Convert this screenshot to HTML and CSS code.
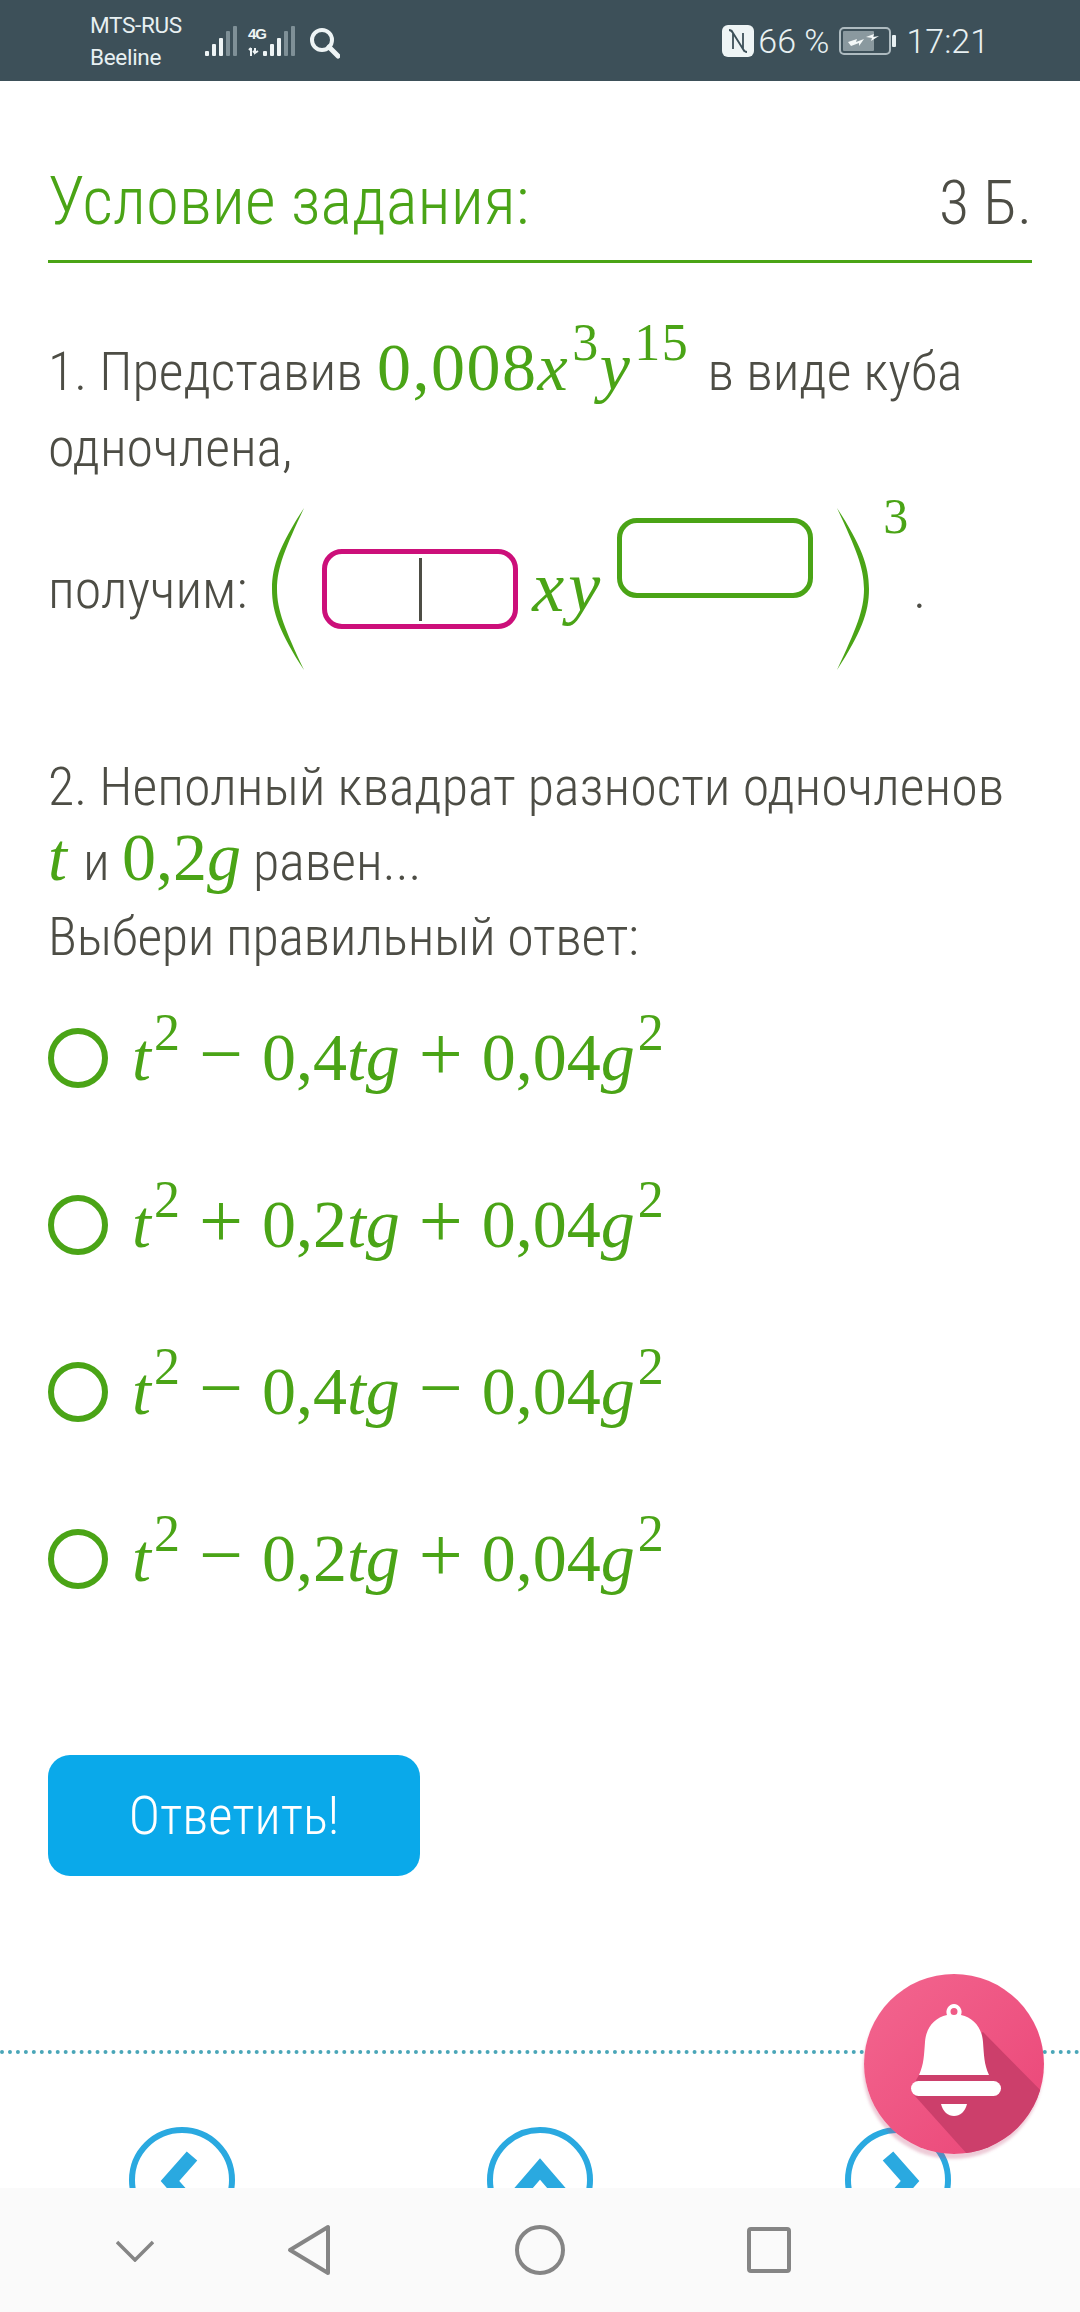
FILE: index.html
```html
<!DOCTYPE html>
<html lang="ru">
<head>
    <meta charset="UTF-8">
    <meta name="viewport" content="width=device-width, initial-scale=1.0">
    <title>Условие задания</title>
    <link rel="stylesheet" href="styles.css">
</head>
<body>
<div class="page">

    <!-- phone status bar -->
    <div class="status-bar">
        <div class="carriers">
            <div>MTS-RUS</div>
            <div>Beeline</div>
        </div>
        <svg class="signal" width="135" height="34" viewBox="0 0 135 34">
            <g fill="#eef4f5">
                <rect x="0" y="26" width="4" height="5" rx="1"/>
                <rect x="7" y="19" width="4" height="12" rx="1"/>
                <rect x="14" y="13" width="4" height="18" rx="1"/>
            </g>
            <g fill="#7f9097">
                <rect x="21" y="6" width="4" height="25" rx="1"/>
                <rect x="28" y="1" width="4" height="30" rx="1"/>
            </g>
            <text x="43" y="14" class="signal-text">4G</text>
            <path d="M46 23v8M44 25l2-2M50 23v5l3-2M50 28l-2-2" stroke="#eef4f5" stroke-width="2" fill="none"/>
            <g fill="#eef4f5">
                <rect x="58" y="26" width="4" height="5" rx="1"/>
                <rect x="65" y="19" width="4" height="12" rx="1"/>
                <rect x="72" y="13" width="4" height="18" rx="1"/>
            </g>
            <g fill="#7f9097">
                <rect x="79" y="6" width="4" height="25" rx="1"/>
                <rect x="86" y="1" width="4" height="30" rx="1"/>
            </g>
            <circle cx="117" cy="15" r="10" fill="none" stroke="#eef4f5" stroke-width="4"/>
            <path d="M124 22l9 9" stroke="#eef4f5" stroke-width="5" stroke-linecap="round"/>
        </svg>
        <div class="status-right">
            <svg width="32" height="32" viewBox="0 0 32 32">
                <rect x="0" y="0" width="32" height="32" rx="6" fill="#eef4f5"/>
                <path d="M7 5c2 0 3 1 4 3l10 16V8M25 27c-2 0-3-1-4-3L11 8v16" fill="none" stroke="#3d5059" stroke-width="1.8"/>
            </svg>
            <span class="status-text percent">66 %</span>
            <svg width="57" height="28" viewBox="0 0 57 28" class="battery">
                <rect x="1" y="1" width="50" height="26" rx="4" fill="none" stroke="#aebbc0" stroke-width="2"/>
                <rect x="4" y="4" width="31" height="20" rx="1" fill="#8a999f"/>
                <rect x="53" y="8" width="4" height="12" rx="1" fill="#e8f0f2"/>
                <path d="M9 15l9-3-1 3 8-3-5 7 0-3-8 3zM27 10l8-3-1 3 6-1-8 5 1-3z" fill="#f4f8f8"/>
            </svg>
            <span class="status-text">17:21</span>
        </div>
    </div>

    <div class="content">
        <div class="task-header">
            <h1 class="task-title">Условие задания:</h1>
            <div class="task-points">3 Б.</div>
        </div>

        <p class="question first">1. Представив <span class="math big"><span class="num">0,008</span><i>x</i><sup>3</sup><i>y</i><sup>15</sup></span> <span class="after-math">в виде куба</span><br>одночлена,</p>

        <div class="answer-line">
            <span class="answer-label">получим:</span>
            <svg class="paren" width="33" height="162" viewBox="0 0 33 158" preserveAspectRatio="none">
                <path d="M32 0C8 36 0 56 0 79s8 43 32 79C13 118 5 100 5 79S13 40 32 0z" fill="#4aa416"/>
            </svg>
            <span class="field active"><span class="caret"></span></span>
            <span class="math xy"><i>xy</i></span>
            <span class="field raised"></span>
            <svg class="paren right" width="33" height="162" viewBox="0 0 33 158" preserveAspectRatio="none">
                <path d="M32 0C8 36 0 56 0 79s8 43 32 79C13 118 5 100 5 79S13 40 32 0z" fill="#4aa416"/>
            </svg>
            <span class="math power">3</span>
            <span class="answer-label dot">.</span>
        </div>

        <p class="question second">2. Неполный квадрат разности одночленов<br><span class="math"><i>t</i></span> <span class="after-t">и</span> <span class="math">0,2<i>g</i></span> равен...</p>
        <p class="question choose">Выбери правильный ответ:</p>

        <div class="options">
            <div class="option"><span class="radio"></span><span class="math"><i>t</i><sup>2</sup><b>−</b>0,4<i>tg</i><b>+</b>0,04<i>g</i><sup>2</sup></span></div>
            <div class="option"><span class="radio"></span><span class="math"><i>t</i><sup>2</sup><b>+</b>0,2<i>tg</i><b>+</b>0,04<i>g</i><sup>2</sup></span></div>
            <div class="option"><span class="radio"></span><span class="math"><i>t</i><sup>2</sup><b>−</b>0,4<i>tg</i><b>−</b>0,04<i>g</i><sup>2</sup></span></div>
            <div class="option"><span class="radio"></span><span class="math"><i>t</i><sup>2</sup><b>−</b>0,2<i>tg</i><b>+</b>0,04<i>g</i><sup>2</sup></span></div>
        </div>

        <button class="submit-btn">Ответить!</button>
    </div>

    <div class="dotted-line"></div>

    <div class="pager">
        <svg class="pager-btn" width="108" height="108" viewBox="0 0 108 108">
            <circle cx="54" cy="54" r="50" fill="none" stroke="#2aa9e0" stroke-width="6"/>
            <path d="M64 30L42 55l22 25" fill="none" stroke="#2aa9e0" stroke-width="14"/>
        </svg>
        <svg class="pager-btn" width="108" height="108" viewBox="0 0 108 108">
            <circle cx="54" cy="54" r="50" fill="none" stroke="#2aa9e0" stroke-width="6"/>
            <path d="M29 72l25-29 25 29" fill="none" stroke="#2aa9e0" stroke-width="14"/>
        </svg>
        <svg class="pager-btn" width="108" height="108" viewBox="0 0 108 108">
            <circle cx="54" cy="54" r="50" fill="none" stroke="#2aa9e0" stroke-width="6"/>
            <path d="M44 30l22 25-22 25" fill="none" stroke="#2aa9e0" stroke-width="14"/>
        </svg>
    </div>

    <!-- android navigation bar -->
    <div class="nav-bar">
        <svg class="nav-icon hide" width="38" height="22" viewBox="0 0 38 22">
            <path d="M1 2l18 18L37 2" fill="none" stroke="#858585" stroke-width="3.5"/>
        </svg>
        <svg class="nav-icon back" width="44" height="52" viewBox="0 0 44 52">
            <path d="M41 3v46L3 26z" fill="none" stroke="#858585" stroke-width="4" stroke-linejoin="round"/>
        </svg>
        <svg class="nav-icon home" width="50" height="50" viewBox="0 0 50 50">
            <circle cx="25" cy="25" r="23" fill="none" stroke="#858585" stroke-width="4"/>
        </svg>
        <svg class="nav-icon recent" width="44" height="46" viewBox="0 0 44 46">
            <rect x="2" y="2" width="40" height="42" rx="2" fill="none" stroke="#858585" stroke-width="4"/>
        </svg>
    </div>

    <!-- floating notifications button -->
    <div class="bell-btn">
        <svg width="180" height="180" viewBox="0 0 180 180">
            <defs>
                <clipPath id="bellClip"><circle cx="90" cy="90" r="90"/></clipPath>
            </defs>
            <g clip-path="url(#bellClip)">
                <path d="M119 58l81 82-70 70-79-88-4-7 8-14z" fill="#cc3f6b"/>
            </g>
            <path d="M90 30a8 8 0 0 1 7 11c13 3 21 13 22 27 1 13 1 22 6 33H55c5-11 5-20 6-33 1-14 9-24 22-27a8 8 0 0 1 7-11zm0 4a3.5 3.5 0 1 0 0 7 3.5 3.5 0 0 0 0-7z" fill="#fff" fill-rule="evenodd"/>
            <rect x="47" y="107" width="90" height="15" rx="7.5" fill="#fff"/>
            <path d="M77 130h26c-2 8-7 12-13 12s-11-4-13-12z" fill="#fff"/>
        </svg>
    </div>
</div>
</body>
</html>
```

FILE: styles.css
```css
* {
    box-sizing: border-box;
}
body {
    margin: 0;
    background: #fff;
    font-family: Roboto, "Noto Sans", sans-serif;
}
.page {
    position: relative;
    display: flex;
    flex-direction: column;
    width: 1080px;
    height: 2312px;
    overflow: hidden;
}

/* status bar */
.status-bar {
    display: flex;
    align-items: center;
    flex: none;
    height: 81px;
    padding: 0 91px 0 90px;
    background: #3d5059;
    color: #e8f0f2;
}
.carriers {
    width: 115px;
    font-size: 22.5px;
    line-height: 32px;
    letter-spacing: -0.3px;
}
.signal {
    margin-top: 2px;
}
.signal-text {
    font-family: "Liberation Sans", sans-serif;
    font-weight: bold;
    font-size: 15px;
    fill: #eef4f5;
    letter-spacing: -1px;
}
.status-right {
    display: flex;
    align-items: center;
    margin-left: auto;
}
.status-text {
    font-size: 34px;
    font-weight: 300;
}
.percent {
    margin: 0 10px 0 4px;
}
.battery {
    margin-right: 10px;
}

/* task */
.content {
    flex: 1;
    padding: 0 48px;
}
.task-header {
    display: flex;
    justify-content: space-between;
    align-items: baseline;
    margin-top: 81px;
    padding-bottom: 18px;
    border-bottom: 3px solid #4aa416;
    font-weight: 300;
    font-size: 67px;
    line-height: 78px;
    font-stretch: 75%;
}
.task-title {
    margin: 0;
    font: inherit;
    color: #4aa416;
}
.task-points {
    color: #4d4d45;
    font-size: 62px;
}
.question {
    margin: 0;
    color: #4d4d45;
    font-weight: 300;
    font-size: 54px;
    line-height: 76px;
    font-stretch: 75%;
}
.question.first {
    margin-top: 71px;
}
.question.second,
.question.choose {
    line-height: 75px;
}
.question.choose {
    letter-spacing: -0.3px;
}
.question .math {
    line-height: 0;
}
.after-math {
    margin-left: 6px;
}
.after-t {
    margin-left: 4px;
}
.math {
    font-family: "Liberation Serif", serif;
    color: #4aa416;
    font-size: 68px;
    font-weight: normal;
    white-space: nowrap;
}
.big {
    letter-spacing: 1.5px;
}
.big .num {
    margin-left: 2px;
}
.math i + sup {
    margin-left: 3px;
}
.math sup {
    font-size: 52px;
    line-height: 0;
    vertical-align: 30px;
}
.math b {
    font-weight: normal;
    font-size: 78px;
    line-height: 0;
    margin: 0 19px;
}

/* line with the two input boxes */
.answer-line {
    display: flex;
    align-items: center;
    height: 172px;
    margin-top: 6px;
}
.answer-label {
    color: #4d4d45;
    font-weight: 300;
    font-size: 54px;
    font-stretch: 75%;
    margin-top: 22px;
}
.paren {
    margin: 21px 0 0 25px;
}
.paren.right {
    transform: scaleX(-1);
    margin-left: 23px;
}
.field {
    display: flex;
    justify-content: center;
    align-items: center;
    width: 196px;
    height: 80px;
    margin: 22px 0 0 17px;
    background: #fff;
    border: 5px solid #4aa416;
    border-radius: 20px;
}
.field.active {
    border-color: #cc0f7a;
}
.field.raised {
    margin: -41px 0 0 13px;
}
.caret {
    width: 3px;
    height: 63px;
    background: #4d4d45;
}
.xy {
    margin: 18px 0 0 14px;
    font-size: 72px;
    letter-spacing: 4px;
}
.power {
    font-size: 50px;
    margin: -125px 0 0 14px;
}
.dot {
    margin: 22px 0 0 5px;
}

.question.second {
    margin-top: 85px;
}

/* answer options */
.options {
    margin-top: 0;
}
.option {
    display: flex;
    align-items: center;
    gap: 24px;
    height: 167px;
}
.radio {
    flex: none;
    width: 60px;
    height: 60px;
    border: 6px solid #4aa416;
    border-radius: 50%;
}
.submit-btn {
    display: block;
    width: 372px;
    height: 121px;
    margin-top: 113px;
    background: #0aa9ea;
    border: none;
    border-radius: 22px;
    color: #fff;
    font-family: inherit;
    font-weight: 300;
    font-size: 53px;
    font-stretch: 75%;
}

/* bottom of the page */
.dotted-line {
    flex: none;
    height: 4px;
    border-top: 4px dotted #4aa6b8;
}
.pager {
    display: flex;
    justify-content: space-between;
    flex: none;
    height: 134px;
    padding: 72px 128px 0;
    overflow: hidden;
}
.pager-btn {
    flex: none;
}
.nav-bar {
    position: relative;
    display: flex;
    align-items: center;
    flex: none;
    height: 124px;
    background: #fafafa;
}
.nav-icon {
    position: absolute;
}
.hide { left: 116px; top: 52px; }
.back { left: 287px; top: 36px; }
.home { left: 515px; top: 37px; }
.recent { left: 747px; top: 39px; }

.bell-btn {
    position: absolute;
    left: 864px;
    top: 1974px;
    width: 180px;
    height: 180px;
    border-radius: 50%;
    background: linear-gradient(135deg, #f3668f, #ea4577);
    box-shadow: -1px 5px 3px rgba(190, 70, 110, 0.28);
}
.bell-btn svg {
    display: block;
}
```
